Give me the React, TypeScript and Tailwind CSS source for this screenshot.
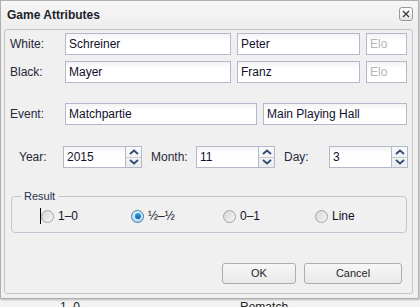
import React from "react";

const font = { fontFamily: '"Liberation Sans", Arial, sans-serif' };

const Field: React.FC<{ value?: string; placeholder?: string; w: string }> = ({ value, placeholder, w }) => (
  <div
    className={`${w} h-[22px] border border-[#b4b8cb] bg-gradient-to-b from-[#f3f3f3] to-white to-[35%] pl-[3px] flex items-center text-[12px] ${
      value ? "text-[#10102a]" : "text-[#b5b5b5]"
    }`}
  >
    {value ?? placeholder}
  </div>
);

const Chevron: React.FC<{ up?: boolean }> = ({ up }) => (
  <svg width="10" height="6" viewBox="0 0 10 6">
    <path
      d={up ? "M1 5 L5 1.5 L9 5" : "M1 1 L5 4.5 L9 1"}
      fill="none"
      stroke="#2f4a78"
      strokeWidth="1.8"
    />
  </svg>
);

const Spinner: React.FC<{ value: string }> = ({ value }) => (
  <div className="flex h-[22px]">
    <Field value={value} w="w-[63px]" />
    <div className="w-[16px] h-[22px] border border-[#b4b8cb] border-l-0 flex flex-col bg-gradient-to-b from-[#fafafa] to-[#ececec]">
      <div className="flex-1 flex items-center justify-center border-b border-[#c9ccd8]">
        <Chevron up />
      </div>
      <div className="flex-1 flex items-center justify-center">
        <Chevron />
      </div>
    </div>
  </div>
);

const Radio: React.FC<{ label: string; checked?: boolean; w: string }> = ({ label, checked, w }) => (
  <div className={`${w} flex items-center gap-[4px]`}>
    {checked ? (
      <div className="w-[13px] h-[13px] rounded-full border border-[#3d7cad] bg-gradient-to-b from-[#dfeefa] to-[#b9d6ee] flex items-center justify-center">
        <div className="w-[6px] h-[6px] rounded-full bg-gradient-to-b from-[#37a9ec] to-[#0b5f9e]" />
      </div>
    ) : (
      <div className="w-[13px] h-[13px] rounded-full border border-[#a3a3a3] bg-gradient-to-br from-[#d6d6d6] to-[#f7f7f7]" />
    )}
    <span className="text-[12px] text-[#10102a]">{label}</span>
  </div>
);

const Label: React.FC<{ text: string; w: string }> = ({ text, w }) => (
  <div className={`${w} text-[12px] text-[#262636]`}>{text}</div>
);

export default function App() {
  return (
    <div className="w-[420px] h-[307px] overflow-hidden bg-[#f3f3f3]" style={font}>
      <div className="w-[419px] h-[299px] border border-[#b0b0b0] bg-[#f0f0f0] shadow-[1px_1px_2px_rgba(0,0,0,0.25)] flex flex-col">
        {/* title bar */}
        <div className="h-[28px] flex items-center justify-between pl-[6px] pr-[5px] bg-gradient-to-b from-[#f6f6f6] to-[#eeeeee]">
          <span className="text-[12px] font-bold text-[#1e1e2c]">Game Attributes</span>
          <div className="w-[14px] h-[14px] mb-[3px] rounded-[3px] border border-[#9a9a9a] bg-gradient-to-b from-white to-[#e4e4e4] flex items-center justify-center">
            <svg width="10" height="10" viewBox="0 0 10 10">
              <path d="M2 2 L8 8 M8 2 L2 8" stroke="#404040" strokeWidth="1.4" />
            </svg>
          </div>
        </div>

        {/* panel */}
        <div className="ml-[3px] w-[409px] h-[265px] border border-[#c4c4c4] rounded-[3px] bg-[#f0f0f0] pt-[3px] pl-[5px] flex flex-col">
          <div className="flex items-center">
            <Label text="White:" w="w-[55px]" />
            <Field value="Schreiner" w="w-[166px]" />
            <div className="w-[6px]" />
            <Field value="Peter" w="w-[123px]" />
            <div className="w-[6px]" />
            <Field placeholder="Elo" w="w-[41px]" />
          </div>
          <div className="flex items-center mt-[6px]">
            <Label text="Black:" w="w-[55px]" />
            <Field value="Mayer" w="w-[166px]" />
            <div className="w-[6px]" />
            <Field value="Franz" w="w-[123px]" />
            <div className="w-[6px]" />
            <Field placeholder="Elo" w="w-[41px]" />
          </div>
          <div className="flex items-center mt-[20px]">
            <Label text="Event:" w="w-[55px]" />
            <Field value="Matchpartie" w="w-[192px]" />
            <div className="w-[6px]" />
            <Field value="Main Playing Hall" w="w-[144px]" />
          </div>
          <div className="flex items-center mt-[21px] pl-[9px]">
            <Label text="Year:" w="w-[44px]" />
            <Spinner value="2015" />
            <div className="w-[9px]" />
            <Label text="Month:" w="w-[45px]" />
            <Spinner value="11" />
            <div className="w-[9px]" />
            <Label text="Day:" w="w-[45px]" />
            <Spinner value="3" />
          </div>

          {/* result group */}
          <div className="relative mt-[28px] ml-[1px] w-[396px] h-[37px] border border-[#c3c6d2] rounded-[4px] flex items-center pl-[28px] pt-[3px]">
            <span className="absolute -top-[8px] left-[9px] px-[3px] bg-[#f0f0f0] text-[11px] leading-[14px] text-[#28324e]">
              Result
            </span>
            <div className="w-px h-[16px] bg-black" />
            <Radio label="1–0" w="w-[90px]" />
            <Radio label="½–½" checked w="w-[92px]" />
            <Radio label="0–1" w="w-[92px]" />
            <Radio label="Line" w="w-[80px]" />
          </div>

          <div className="flex justify-end gap-[8px] pr-[10px] mt-[30px]">
            <button className="w-[74px] h-[21px] rounded-[3px] border border-[#adadad] bg-gradient-to-b from-[#f7f7f7] to-[#e9e9e9] text-[11px] text-[#1e1e2c]">
              OK
            </button>
            <button className="w-[98px] h-[21px] rounded-[3px] border border-[#adadad] bg-gradient-to-b from-[#f7f7f7] to-[#e9e9e9] text-[11px] text-[#1e1e2c]">
              Cancel
            </button>
          </div>
        </div>
      </div>

      {/* content underneath the dialog */}
      <div className="flex text-[12px] leading-[14px] text-[#222] pt-[1px]">
        <span className="ml-[60px]">1–0</span>
        <span className="ml-[160px]">Rematch</span>
      </div>
    </div>
  );
}
